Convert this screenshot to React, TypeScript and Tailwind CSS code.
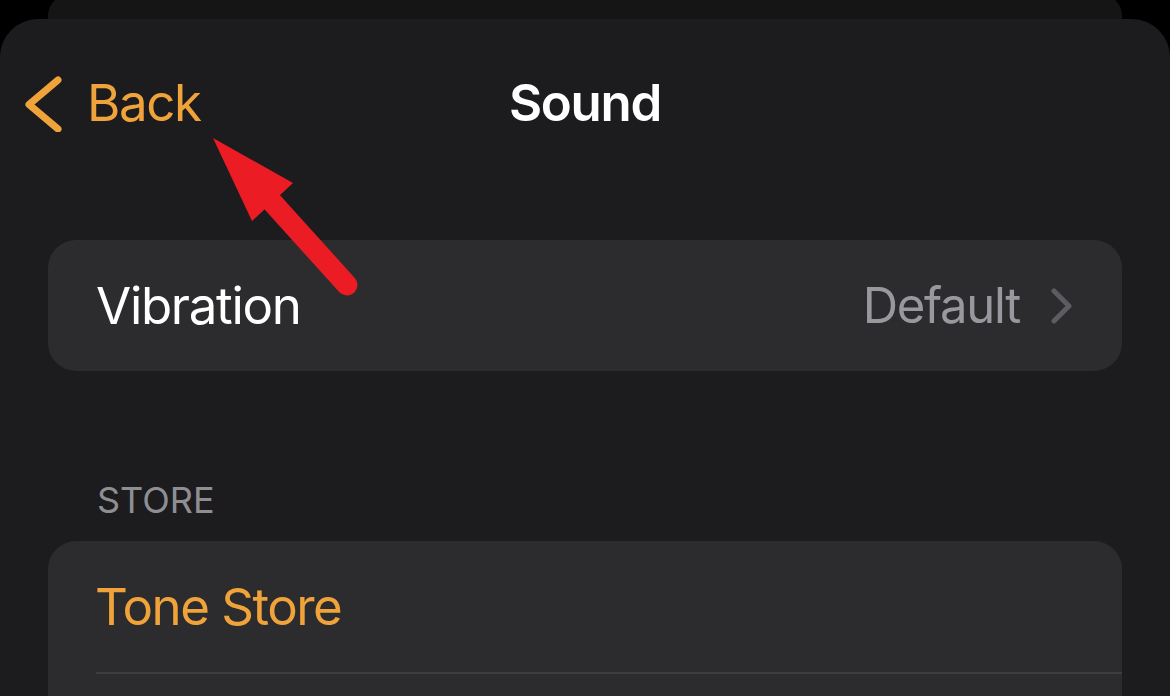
import React from "react";

export default function App() {
  return (
    <div
      className="relative flex h-[696px] w-[1170px] flex-col overflow-hidden bg-black"
      style={{ fontFamily: "Inter, 'Noto Sans', sans-serif" }}
    >
      <div className="mx-[48px] -mt-[6px] h-[25px] shrink-0 rounded-t-[22px] bg-[#151515]" />
      <div className="flex flex-1 flex-col rounded-t-[38px] bg-[#1c1c1e]">
        <div className="grid h-[166px] grid-cols-[1fr_auto_1fr] items-center">
          <div className="flex items-center pl-[24px] text-[#f0a33a]">
            <svg width="40" height="60" viewBox="0 0 40 60" className="shrink-0">
              <polyline
                points="34,8 5,32.5 34,57"
                fill="none"
                stroke="#f0a33a"
                strokeWidth="7"
                strokeLinecap="round"
                strokeLinejoin="round"
              />
            </svg>
            <span className="ml-[23px] text-[51px] leading-none tracking-[-1.4px]">Back</span>
          </div>
          <div className="text-[51px] font-semibold leading-none tracking-[-1.3px] text-white">Sound</div>
          <div />
        </div>

        <div className="mx-[48px] mt-[55px] flex h-[131px] items-center rounded-[28px] bg-[#2c2c2e] pl-[48px] pr-[49px]">
          <span className="text-[51px] leading-none tracking-[-1.3px] text-white">Vibration</span>
          <span className="ml-auto text-[49px] leading-none tracking-[-1.3px] text-[#98989f]">Default</span>
          <svg width="22" height="36" viewBox="0 0 22 36" className="ml-[31px] shrink-0">
            <polyline
              points="3,3 18,18 3,33"
              fill="none"
              stroke="#5c5c61"
              strokeWidth="5"
              strokeLinecap="round"
              strokeLinejoin="round"
            />
          </svg>
        </div>

        <div className="mt-[111px] pl-[97px] text-[36px] leading-none text-[#8e8e93]">STORE</div>

        <div className="mx-[48px] mt-[23px] flex flex-1 flex-col rounded-t-[28px] bg-[#2c2c2e]">
          <div className="flex h-[131px] items-center pl-[47px]">
            <span className="text-[51px] leading-none tracking-[-1.5px] text-[#f0a33a]">Tone Store</span>
          </div>
          <div className="ml-[48px] h-[2px] bg-[#3d3d40]" />
        </div>
      </div>

      <svg
        className="pointer-events-none absolute left-0 top-0"
        width="1170"
        height="696"
        viewBox="0 0 1170 696"
      >
        <line x1="272" y1="202" x2="347" y2="285" stroke="#ec1c24" strokeWidth="21" strokeLinecap="round" />
        <polygon points="213,138 293,183 252,221" fill="#ec1c24" />
      </svg>
    </div>
  );
}
